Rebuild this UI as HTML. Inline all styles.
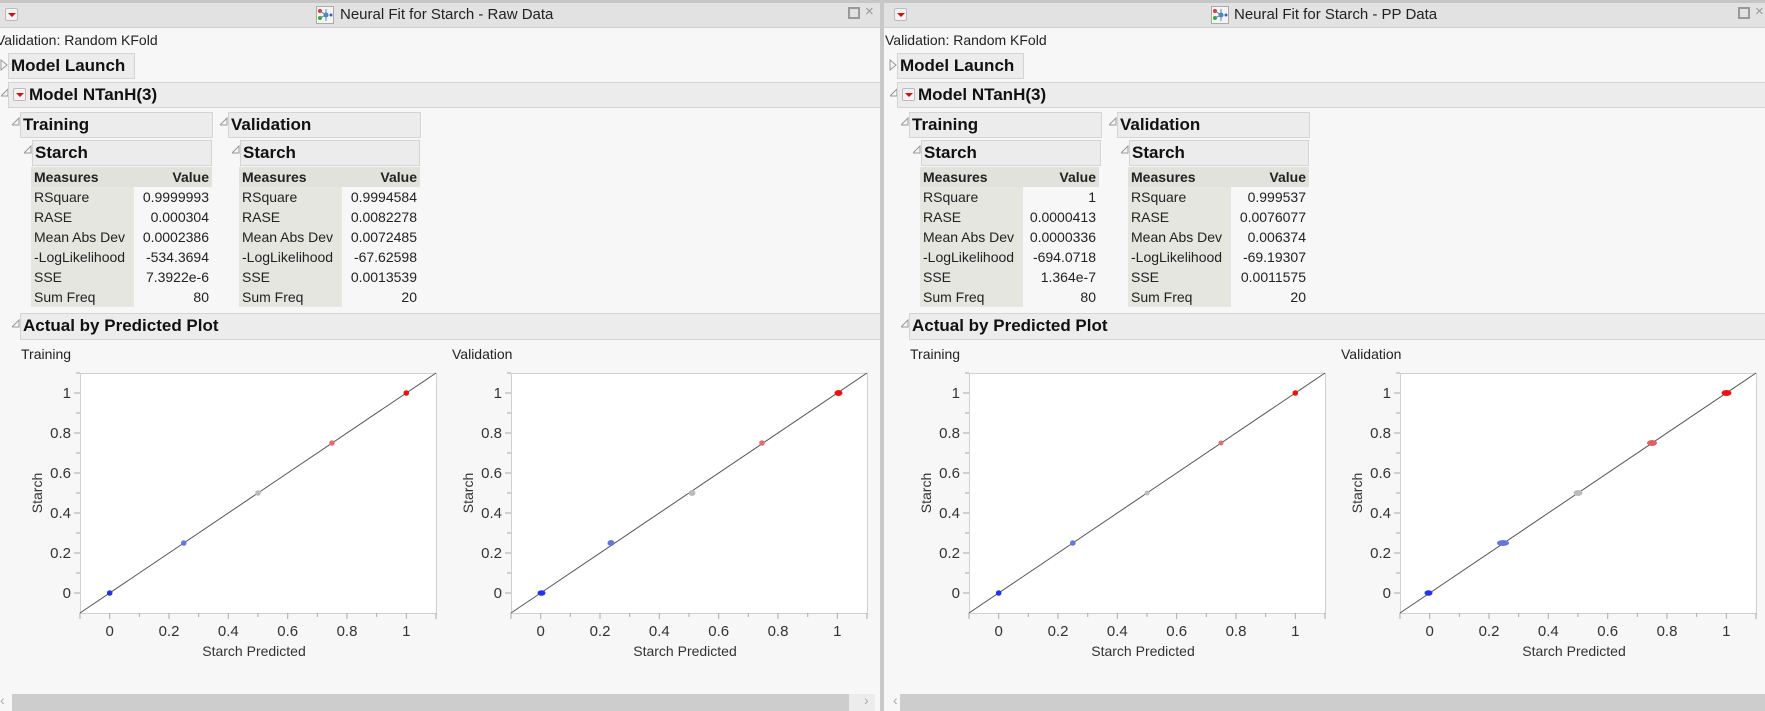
<!DOCTYPE html>
<html><head><meta charset="utf-8">
<style>
*{margin:0;padding:0;box-sizing:border-box}
body{width:1765px;height:711px;background:#f7f7f7;position:relative;overflow:hidden;font-family:"Liberation Sans",sans-serif;color:#222}
.pan{position:absolute;top:0;height:711px;overflow:hidden;background:#f7f7f7}
.in{position:absolute;top:0;width:890px;height:711px}
.a{position:absolute;white-space:nowrap}
.tb{position:absolute;left:-10px;top:0;width:900px;height:28px;background:#e2e2e2;border-top:3px solid #c6c6c6;border-bottom:1px solid #cfcfcf}
.hd{position:absolute;background:#ececec;border:1px solid #d4d4d4;font-weight:bold;font-size:17px;line-height:24px;padding-left:2px;color:#111}
.t{position:absolute;font-size:14px;line-height:20px}
table{position:absolute;border-collapse:collapse;font-size:14px}
td{height:20px;padding:0 3px;line-height:20px}
td.m{background:#e6e6e1}
td.v{text-align:right}
tr.h td{background:#e2e2dd;font-weight:bold}
.dd{position:absolute;width:13px;height:13px;border:1px solid #bbb;background:#f3f3f3;border-radius:2px}
.dd:after{content:"";position:absolute;left:2px;top:4px;border-left:4px solid transparent;border-right:4px solid transparent;border-top:4px solid #d01010}
.sb{position:absolute;top:694px;height:17px;background:#cdcdcd}
svg text{font-family:"Liberation Sans",sans-serif}
</style></head><body>

<!-- LEFT PANEL -->
<div class="pan" style="left:0;width:880px">
<div class="in" style="left:0">
<div class="tb"></div>
<div class="dd" style="left:5px;top:8px"></div>
<svg class="a" style="left:316px;top:6px" width="18" height="18" viewBox="0 0 18 18"><rect x="0.5" y="0.5" width="17" height="17" fill="#f4f4f4" stroke="#aaa"/><circle cx="4" cy="5" r="2" fill="#d33"/><circle cx="4" cy="12" r="2" fill="#3a3"/><circle cx="10" cy="9" r="2.5" fill="#38c"/><circle cx="15" cy="9" r="1.5" fill="#36a"/><path d="M4 5L10 9L4 12M10 3V15" stroke="#68a" fill="none"/></svg>
<div class="a" style="left:340px;top:6px;font-size:15px">Neural Fit for Starch - Raw Data</div>
<div class="a" style="left:848px;top:7px;width:12px;height:12px;border:2px solid #999"></div>
<div class="a" style="left:865px;top:3px;font-size:15px;color:#999">×</div>

<div class="a" style="left:-4px;top:32px;font-size:14px">Validation: Random KFold</div>
<svg class="a" style="left:0;top:59px" width="8" height="12"><path d="M1 1L7 6L1 11Z" fill="none" stroke="#999"/></svg>
<div class="hd" style="left:8px;top:53px;width:127px;height:26px">Model Launch</div>
<svg class="a" style="left:1px;top:88px" width="8" height="10"><path d="M7 1V8H0Z" fill="none" stroke="#999"/></svg>
<div class="hd" style="left:8px;top:82px;width:880px;height:26px;padding-left:20px">Model NTanH(3)</div>
<div class="dd" style="left:13px;top:88px"></div>
<svg class="a" style="left:12px;top:117px" width="8" height="10"><path d="M7 1V8H0Z" fill="none" stroke="#999"/></svg>
<div class="hd" style="left:20px;top:112px;width:193px;height:26px">Training</div>
<svg class="a" style="left:220px;top:117px" width="8" height="10"><path d="M7 1V8H0Z" fill="none" stroke="#999"/></svg>
<div class="hd" style="left:228px;top:112px;width:193px;height:26px">Validation</div>
<svg class="a" style="left:24px;top:145px" width="8" height="10"><path d="M7 1V8H0Z" fill="none" stroke="#999"/></svg>
<div class="hd" style="left:32px;top:140px;width:180px;height:26px">Starch</div>
<svg class="a" style="left:232px;top:145px" width="8" height="10"><path d="M7 1V8H0Z" fill="none" stroke="#999"/></svg>
<div class="hd" style="left:240px;top:140px;width:180px;height:26px">Starch</div>

<table style="left:31px;top:167px"><colgroup><col style="width:103px"><col style="width:78px"></colgroup>
<tr class="h"><td>Measures</td><td class="v">Value</td></tr>
<tr><td class="m">RSquare</td><td class="v">0.9999993</td></tr>
<tr><td class="m">RASE</td><td class="v">0.000304</td></tr>
<tr><td class="m">Mean Abs Dev</td><td class="v">0.0002386</td></tr>
<tr><td class="m">-LogLikelihood</td><td class="v">-534.3694</td></tr>
<tr><td class="m">SSE</td><td class="v">7.3922e-6</td></tr>
<tr><td class="m">Sum Freq</td><td class="v">80</td></tr>
</table>
<table style="left:239px;top:167px"><colgroup><col style="width:103px"><col style="width:78px"></colgroup>
<tr class="h"><td>Measures</td><td class="v">Value</td></tr>
<tr><td class="m">RSquare</td><td class="v">0.9994584</td></tr>
<tr><td class="m">RASE</td><td class="v">0.0082278</td></tr>
<tr><td class="m">Mean Abs Dev</td><td class="v">0.0072485</td></tr>
<tr><td class="m">-LogLikelihood</td><td class="v">-67.62598</td></tr>
<tr><td class="m">SSE</td><td class="v">0.0013539</td></tr>
<tr><td class="m">Sum Freq</td><td class="v">20</td></tr>
</table>

<svg class="a" style="left:12px;top:319px" width="8" height="10"><path d="M7 1V8H0Z" fill="none" stroke="#999"/></svg>
<div class="hd" style="left:20px;top:313px;width:880px;height:27px">Actual by Predicted Plot</div>
<div class="a" style="left:21px;top:346px;font-size:14px">Training</div>
<div class="a" style="left:452px;top:346px;font-size:14px">Validation</div>

<svg class="a" style="left:0;top:0" width="880" height="711">
<g>
<rect x="80.5" y="373.5" width="356" height="240" fill="#fff" stroke="#d0d0d0"/>
<g stroke="#aaa">
<path d="M80 613v6M109.7 613v6M139.3 613v4M169 613v6M198.7 613v4M228.3 613v6M258 613v4M287.7 613v6M317.3 613v4M347 613v6M376.7 613v4M406.3 613v6M436 613v6"/>
<path d="M74 593h6M76 573h4M74 553h6M76 533h4M74 513h6M76 493h4M74 473h6M76 453h4M74 433h6M76 413h4M74 393h6M76 373h4"/>
</g>
<line x1="80" y1="613" x2="436" y2="373" stroke="#555" stroke-width="1"/>
<g font-size="15" fill="#333" text-anchor="end">
<text x="71" y="598">0</text><text x="71" y="558">0.2</text><text x="71" y="518">0.4</text><text x="71" y="478">0.6</text><text x="71" y="438">0.8</text><text x="71" y="398">1</text></g>
<g font-size="15" fill="#333" text-anchor="middle">
<text x="109.7" y="636">0</text><text x="169" y="636">0.2</text><text x="228.3" y="636">0.4</text><text x="287.7" y="636">0.6</text><text x="347" y="636">0.8</text><text x="406.3" y="636">1</text>
<text x="254" y="656" font-size="14">Starch Predicted</text>
<text transform="translate(42,493) rotate(-90)" font-size="14">Starch</text></g>
<circle cx="109.7" cy="593" r="2.8" fill="#2233ee"/>
<circle cx="183.8" cy="543" r="2.8" fill="#6677dd"/>
<circle cx="258" cy="493" r="2.8" fill="#bbb"/>
<circle cx="332" cy="443" r="2.8" fill="#e07070"/>
<circle cx="406.3" cy="393" r="2.8" fill="#ee1111"/>
</g>
<g transform="translate(431,0)">
<rect x="80.5" y="373.5" width="356" height="240" fill="#fff" stroke="#d0d0d0"/>
<g stroke="#aaa">
<path d="M80 613v6M109.7 613v6M139.3 613v4M169 613v6M198.7 613v4M228.3 613v6M258 613v4M287.7 613v6M317.3 613v4M347 613v6M376.7 613v4M406.3 613v6M436 613v6"/>
<path d="M74 593h6M76 573h4M74 553h6M76 533h4M74 513h6M76 493h4M74 473h6M76 453h4M74 433h6M76 413h4M74 393h6M76 373h4"/>
</g>
<line x1="80" y1="613" x2="436" y2="373" stroke="#555" stroke-width="1"/>
<g font-size="15" fill="#333" text-anchor="end">
<text x="71" y="598">0</text><text x="71" y="558">0.2</text><text x="71" y="518">0.4</text><text x="71" y="478">0.6</text><text x="71" y="438">0.8</text><text x="71" y="398">1</text></g>
<g font-size="15" fill="#333" text-anchor="middle">
<text x="109.7" y="636">0</text><text x="169" y="636">0.2</text><text x="228.3" y="636">0.4</text><text x="287.7" y="636">0.6</text><text x="347" y="636">0.8</text><text x="406.3" y="636">1</text>
<text x="254" y="656" font-size="14">Starch Predicted</text>
<text transform="translate(42,493) rotate(-90)" font-size="14">Starch</text></g>
<ellipse cx="110.5" cy="593" rx="4" ry="2.8" fill="#2233ee"/>
<ellipse cx="180" cy="543" rx="3.5" ry="3" fill="#6677dd"/>
<ellipse cx="261" cy="493" rx="3.5" ry="3" fill="#bbb"/>
<circle cx="331" cy="443" r="2.8" fill="#e07070"/>
<ellipse cx="407.5" cy="393" rx="4" ry="3" fill="#ee1111"/>
</g>
</svg>

<div class="sb" style="left:12px;width:837px"></div>
<div class="a" style="left:0;top:692px;font-size:14px;color:#aaa">‹</div>
<div class="a" style="left:849px;top:694px;width:26px;height:17px;background:#ececec"></div>
<div class="a" style="left:864px;top:692px;font-size:14px;color:#aaa">›</div>
</div></div>

<div class="a" style="left:880px;top:0;width:4px;height:711px;background:#c8c8c8"></div>

<!-- RIGHT PANEL -->
<div class="pan" style="left:884px;width:881px">
<div class="in" style="left:5px">
<div class="tb"></div>
<div class="dd" style="left:5px;top:8px"></div>
<svg class="a" style="left:322px;top:6px" width="18" height="18" viewBox="0 0 18 18"><rect x="0.5" y="0.5" width="17" height="17" fill="#f4f4f4" stroke="#aaa"/><circle cx="4" cy="5" r="2" fill="#d33"/><circle cx="4" cy="12" r="2" fill="#3a3"/><circle cx="10" cy="9" r="2.5" fill="#38c"/><circle cx="15" cy="9" r="1.5" fill="#36a"/><path d="M4 5L10 9L4 12M10 3V15" stroke="#68a" fill="none"/></svg>
<div class="a" style="left:345px;top:6px;font-size:15px">Neural Fit for Starch - PP Data</div>
<div class="a" style="left:849px;top:7px;width:12px;height:12px;border:2px solid #999"></div>
<div class="a" style="left:866px;top:3px;font-size:15px;color:#999">×</div>

<div class="a" style="left:-4px;top:32px;font-size:14px">Validation: Random KFold</div>
<svg class="a" style="left:0;top:59px" width="8" height="12"><path d="M1 1L7 6L1 11Z" fill="none" stroke="#999"/></svg>
<div class="hd" style="left:8px;top:53px;width:127px;height:26px">Model Launch</div>
<svg class="a" style="left:1px;top:88px" width="8" height="10"><path d="M7 1V8H0Z" fill="none" stroke="#999"/></svg>
<div class="hd" style="left:8px;top:82px;width:880px;height:26px;padding-left:20px">Model NTanH(3)</div>
<div class="dd" style="left:13px;top:88px"></div>
<svg class="a" style="left:12px;top:117px" width="8" height="10"><path d="M7 1V8H0Z" fill="none" stroke="#999"/></svg>
<div class="hd" style="left:20px;top:112px;width:193px;height:26px">Training</div>
<svg class="a" style="left:220px;top:117px" width="8" height="10"><path d="M7 1V8H0Z" fill="none" stroke="#999"/></svg>
<div class="hd" style="left:228px;top:112px;width:193px;height:26px">Validation</div>
<svg class="a" style="left:24px;top:145px" width="8" height="10"><path d="M7 1V8H0Z" fill="none" stroke="#999"/></svg>
<div class="hd" style="left:32px;top:140px;width:180px;height:26px">Starch</div>
<svg class="a" style="left:232px;top:145px" width="8" height="10"><path d="M7 1V8H0Z" fill="none" stroke="#999"/></svg>
<div class="hd" style="left:240px;top:140px;width:180px;height:26px">Starch</div>

<table style="left:31px;top:167px"><colgroup><col style="width:103px"><col style="width:76px"></colgroup>
<tr class="h"><td>Measures</td><td class="v">Value</td></tr>
<tr><td class="m">RSquare</td><td class="v">1</td></tr>
<tr><td class="m">RASE</td><td class="v">0.0000413</td></tr>
<tr><td class="m">Mean Abs Dev</td><td class="v">0.0000336</td></tr>
<tr><td class="m">-LogLikelihood</td><td class="v">-694.0718</td></tr>
<tr><td class="m">SSE</td><td class="v">1.364e-7</td></tr>
<tr><td class="m">Sum Freq</td><td class="v">80</td></tr>
</table>
<table style="left:239px;top:167px"><colgroup><col style="width:103px"><col style="width:78px"></colgroup>
<tr class="h"><td>Measures</td><td class="v">Value</td></tr>
<tr><td class="m">RSquare</td><td class="v">0.999537</td></tr>
<tr><td class="m">RASE</td><td class="v">0.0076077</td></tr>
<tr><td class="m">Mean Abs Dev</td><td class="v">0.006374</td></tr>
<tr><td class="m">-LogLikelihood</td><td class="v">-69.19307</td></tr>
<tr><td class="m">SSE</td><td class="v">0.0011575</td></tr>
<tr><td class="m">Sum Freq</td><td class="v">20</td></tr>
</table>

<svg class="a" style="left:12px;top:319px" width="8" height="10"><path d="M7 1V8H0Z" fill="none" stroke="#999"/></svg>
<div class="hd" style="left:20px;top:313px;width:880px;height:27px">Actual by Predicted Plot</div>
<div class="a" style="left:21px;top:346px;font-size:14px">Training</div>
<div class="a" style="left:452px;top:346px;font-size:14px">Validation</div>

<svg class="a" style="left:0;top:0" width="880" height="711">
<g>
<rect x="80.5" y="373.5" width="356" height="240" fill="#fff" stroke="#d0d0d0"/>
<g stroke="#aaa">
<path d="M80 613v6M109.7 613v6M139.3 613v4M169 613v6M198.7 613v4M228.3 613v6M258 613v4M287.7 613v6M317.3 613v4M347 613v6M376.7 613v4M406.3 613v6M436 613v6"/>
<path d="M74 593h6M76 573h4M74 553h6M76 533h4M74 513h6M76 493h4M74 473h6M76 453h4M74 433h6M76 413h4M74 393h6M76 373h4"/>
</g>
<line x1="80" y1="613" x2="436" y2="373" stroke="#555" stroke-width="1"/>
<g font-size="15" fill="#333" text-anchor="end">
<text x="71" y="598">0</text><text x="71" y="558">0.2</text><text x="71" y="518">0.4</text><text x="71" y="478">0.6</text><text x="71" y="438">0.8</text><text x="71" y="398">1</text></g>
<g font-size="15" fill="#333" text-anchor="middle">
<text x="109.7" y="636">0</text><text x="169" y="636">0.2</text><text x="228.3" y="636">0.4</text><text x="287.7" y="636">0.6</text><text x="347" y="636">0.8</text><text x="406.3" y="636">1</text>
<text x="254" y="656" font-size="14">Starch Predicted</text>
<text transform="translate(42,493) rotate(-90)" font-size="14">Starch</text></g>
<circle cx="109.7" cy="593" r="2.8" fill="#2233ee"/>
<circle cx="183.8" cy="543" r="2.8" fill="#6677dd"/>
<circle cx="258" cy="493" r="2.5" fill="#bbb"/>
<circle cx="332" cy="443" r="2.5" fill="#e07070"/>
<circle cx="406.3" cy="393" r="2.8" fill="#ee1111"/>
</g>
<g transform="translate(431,0)">
<rect x="80.5" y="373.5" width="356" height="240" fill="#fff" stroke="#d0d0d0"/>
<g stroke="#aaa">
<path d="M80 613v6M109.7 613v6M139.3 613v4M169 613v6M198.7 613v4M228.3 613v6M258 613v4M287.7 613v6M317.3 613v4M347 613v6M376.7 613v4M406.3 613v6M436 613v6"/>
<path d="M74 593h6M76 573h4M74 553h6M76 533h4M74 513h6M76 493h4M74 473h6M76 453h4M74 433h6M76 413h4M74 393h6M76 373h4"/>
</g>
<line x1="80" y1="613" x2="436" y2="373" stroke="#555" stroke-width="1"/>
<g font-size="15" fill="#333" text-anchor="end">
<text x="71" y="598">0</text><text x="71" y="558">0.2</text><text x="71" y="518">0.4</text><text x="71" y="478">0.6</text><text x="71" y="438">0.8</text><text x="71" y="398">1</text></g>
<g font-size="15" fill="#333" text-anchor="middle">
<text x="109.7" y="636">0</text><text x="169" y="636">0.2</text><text x="228.3" y="636">0.4</text><text x="287.7" y="636">0.6</text><text x="347" y="636">0.8</text><text x="406.3" y="636">1</text>
<text x="254" y="656" font-size="14">Starch Predicted</text>
<text transform="translate(42,493) rotate(-90)" font-size="14">Starch</text></g>
<ellipse cx="108.5" cy="593" rx="4" ry="2.8" fill="#2233ee"/>
<ellipse cx="183" cy="543" rx="6" ry="3" fill="#6677dd"/>
<ellipse cx="258" cy="493" rx="4.5" ry="3" fill="#bbb"/>
<ellipse cx="332" cy="443" rx="5" ry="3" fill="#e06060"/>
<ellipse cx="406.5" cy="393" rx="5" ry="3" fill="#ee1111"/>
</g>
</svg>
</div>
<div class="a" style="left:9px;top:692px;font-size:14px;color:#aaa">‹</div>
<div class="sb" style="left:16px;width:865px"></div>
</div>
</body></html>
